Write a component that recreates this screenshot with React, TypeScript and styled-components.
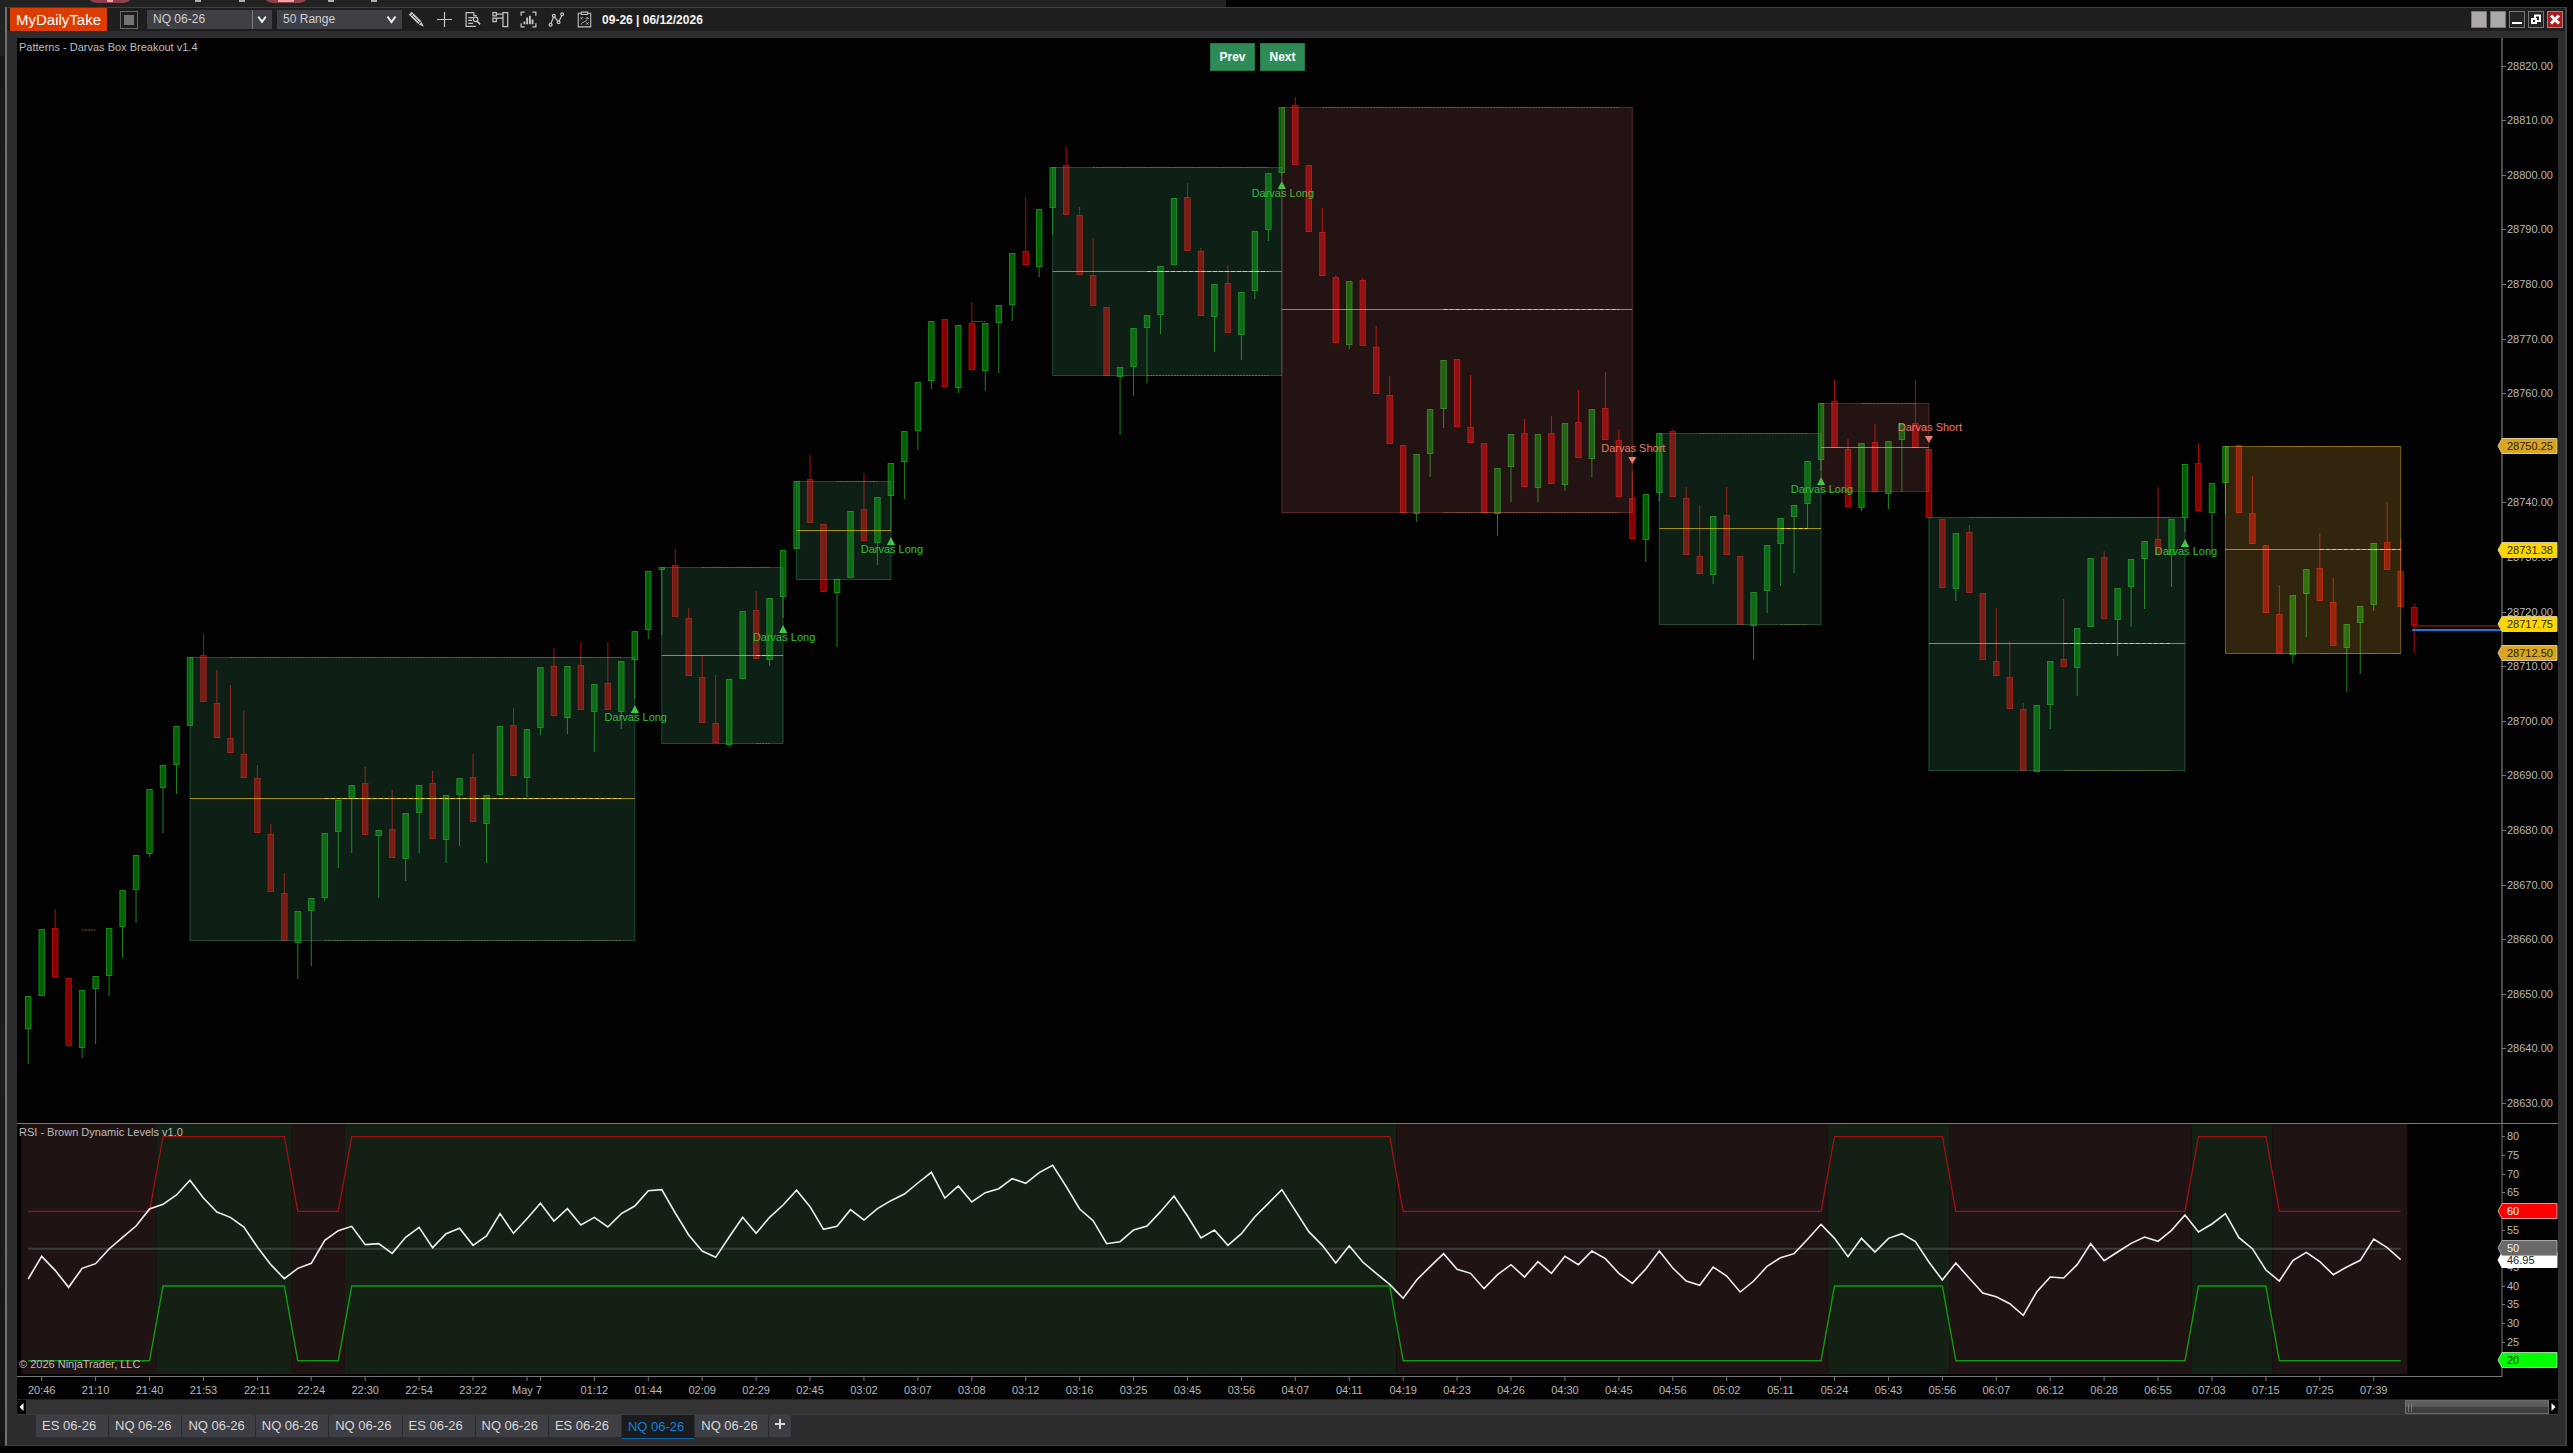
import React from "react";
import styled, { createGlobalStyle, css } from "styled-components";

const FONT = '"Liberation Sans", Arial, sans-serif';

/* ---------- geometry of the chart canvas ---------- */
const LEFT = 17;
const TOP = 38;
const WIDTH = 2541;
const HEIGHT = 1361;
const AXIS_X = 2502;
const RSI_TOP = 1110;
const RANGE = 68;

const barX = (i: number) => 28.2 + 13.48 * i;
const priceY = (p: number) => 66 + (28820 - p) * 5.46;
const rsiY = (v: number) => 1136.7 + (80 - v) * 3.733;

/* close / open levels of every range bar, in canvas rows */
const BARS: [number, number][] = [
  [996, 1029], [929, 996], [977, 928], [1046, 978], [990, 1048], [976, 989], [928, 976], [890, 927], [855, 890],
  [789, 854], [765, 788], [726, 765], [657, 726], [702, 655], [738, 703], [753, 738], [778, 754], [833, 778],
  [892, 834], [941, 893], [911, 943], [898, 911], [833, 898], [800, 832], [785, 799], [835, 783], [830, 836],
  [858, 829], [813, 859], [785, 813], [839, 783], [795, 840], [778, 795], [822, 777], [795, 824], [726, 795],
  [776, 725], [729, 778], [667, 728], [716, 666], [666, 718], [710, 665], [684, 712], [710, 683], [661, 712],
  [631, 660], [571, 630], [567, 570], [617, 565], [676, 618], [723, 677], [743, 723], [679, 745], [611, 679],
  [659, 610], [598, 660], [550, 597], [481, 549], [523, 479], [592, 524], [579, 593], [511, 578], [541, 509],
  [497, 543], [463, 496], [431, 462], [382, 431], [321, 381], [387, 319], [325, 388], [370, 323], [323, 371],
  [305, 323], [253, 305], [265, 251], [209, 267], [167, 208], [215, 165], [275, 215], [306, 275], [376, 307],
  [367, 377], [328, 367], [315, 328], [266, 315], [198, 265], [251, 197], [316, 251], [284, 317], [333, 283],
  [292, 335], [231, 291], [173, 230], [107, 173], [165, 105], [232, 165], [276, 232], [343, 277], [281, 345],
  [346, 280], [394, 347], [444, 395], [513, 445], [454, 514], [409, 454], [360, 409], [427, 359], [443, 427],
  [513, 443], [468, 514], [434, 467], [487, 433], [434, 488], [484, 433], [423, 485], [458, 422], [409, 459],
  [440, 408], [497, 440], [539, 498], [494, 540], [433, 493], [497, 431], [555, 498], [574, 556], [516, 575],
  [555, 515], [625, 556], [592, 626], [545, 591], [518, 544], [505, 517], [461, 504], [403, 460], [448, 401],
  [507, 449], [443, 508], [492, 442], [441, 494], [424, 440], [448, 423], [518, 449], [588, 519], [533, 589],
  [593, 532], [660, 593], [676, 661], [709, 677], [771, 709], [705, 772], [661, 705], [667, 659], [628, 668],
  [558, 627], [619, 557], [588, 620], [559, 587], [541, 559], [555, 539], [519, 555], [464, 518], [511, 463],
  [483, 513], [446, 483], [513, 445], [544, 513], [613, 545], [653, 614], [595, 655], [569, 594], [601, 568],
  [646, 602], [624, 648], [606, 623], [543, 605], [570, 542], [607, 571], [625, 607],
];

type Tone = "long" | "short" | "open";
interface Box {
  from: number;
  to: number;
  top: number;
  bottom: number;
  tone: Tone;
  topDots: [number, number];
  lowDots: [number, number] | null;
}

const BOXES: Box[] = [
  { from: 12, to: 45, top: 657, bottom: 940, tone: "long", topDots: [15, 44], lowDots: [22, 44] },
  { from: 47, to: 56, top: 567, bottom: 743, tone: "long", topDots: [50, 55], lowDots: [54, 55] },
  { from: 57, to: 64, top: 481, bottom: 579, tone: "long", topDots: [60, 63], lowDots: null },
  { from: 76, to: 93, top: 167, bottom: 375, tone: "long", topDots: [79, 92], lowDots: [83, 92] },
  { from: 93, to: 119, top: 107, bottom: 512, tone: "short", topDots: [96, 118], lowDots: [105, 118] },
  { from: 121, to: 133, top: 433, bottom: 624, tone: "long", topDots: [124, 132], lowDots: [130, 132] },
  { from: 133, to: 141, top: 403, bottom: 491, tone: "short", topDots: [136, 140], lowDots: null },
  { from: 141, to: 160, top: 517, bottom: 770, tone: "long", topDots: [144, 159], lowDots: [151, 159] },
  { from: 163, to: 176, top: 446, bottom: 653, tone: "open", topDots: [166, 176], lowDots: [170, 176] },
];

const TONES: Record<Tone, { fill: string; edge: string }> = {
  long: { fill: "rgba(66,150,104,0.2)", edge: "rgba(60,150,100,0.45)" },
  short: { fill: "rgba(205,104,104,0.17)", edge: "rgba(205,92,92,0.36)" },
  open: { fill: "rgba(218,165,56,0.22)", edge: "rgba(218,165,32,0.5)" },
};

const SIGNALS = [
  { bar: 45, y: 721, side: "long" },
  { bar: 56, y: 641, side: "long" },
  { bar: 64, y: 553, side: "long" },
  { bar: 93, y: 197, side: "long" },
  { bar: 119, y: 452, side: "short" },
  { bar: 133, y: 493, side: "long" },
  { bar: 141, y: 431, side: "short" },
  { bar: 160, y: 555, side: "long" },
];

/* RSI curve, in thirds of a row below the panel origin */
const RSI = [
  507, 439, 481, 532, 475, 461, 417, 382, 348, 297, 283, 255, 211, 264, 306, 322, 351, 411, 464, 506, 475, 460, 391,
  362, 349, 404, 401, 430, 382, 352, 413, 371, 355, 406, 378, 311, 370, 326, 280, 333, 296, 345, 322, 351, 311, 288,
  242, 239, 309, 375, 423, 442, 381, 322, 370, 322, 285, 241, 290, 358, 349, 299, 330, 296, 272, 252, 219, 187, 264,
  228, 276, 248, 236, 206, 220, 188, 166, 229, 297, 332, 401, 395, 360, 348, 305, 258, 318, 384, 360, 406, 371, 320,
  280, 239, 302, 365, 406, 459, 407, 456, 490, 523, 565, 510, 470, 431, 478, 490, 536, 494, 464, 501, 455, 490, 439,
  464, 423, 446, 490, 520, 477, 423, 474, 513, 526, 471, 498, 546, 513, 469, 443, 431, 388, 343, 385, 440, 385, 426,
  385, 371, 395, 456, 510, 459, 505, 549, 560, 581, 616, 546, 501, 504, 464, 401, 452, 426, 400, 381, 394, 361, 315,
  366, 342, 311, 383, 416, 480, 513, 452, 427, 455, 494, 471, 451, 387, 413, 449,
];

/* last bar of each regime; bearish and bullish alternate */
const REGIMES: { from: number; to: number; bull: boolean }[] = [
  { from: 0, to: 9, bull: false },
  { from: 10, to: 19, bull: true },
  { from: 20, to: 23, bull: false },
  { from: 24, to: 101, bull: true },
  { from: 102, to: 133, bull: false },
  { from: 134, to: 142, bull: true },
  { from: 143, to: 160, bull: false },
  { from: 161, to: 166, bull: true },
  { from: 167, to: 176, bull: false },
];

const EVENING = ["20:46", "21:10", "21:40", "21:53", "22:11", "22:24", "22:30", "22:54", "23:22", "May 7"];
const MORNING = [
  "01:12", "01:44", "02:09", "02:29", "02:45", "03:02", "03:07", "03:08", "03:12", "03:16", "03:25", "03:45",
  "03:56", "04:07", "04:11", "04:19", "04:23", "04:26", "04:30", "04:45", "04:56", "05:02", "05:11", "05:24",
  "05:43", "05:56", "06:07", "06:12", "06:28", "06:55", "07:03", "07:15", "07:25", "07:39",
];
const TIMES = [
  ...EVENING.map((label, k) => ({ label, bar: 1 + 4 * k })),
  ...MORNING.map((label, k) => ({ label, bar: 42 + 4 * k })),
];

const TABS = [
  "ES 06-26", "NQ 06-26", "NQ 06-26", "NQ 06-26", "NQ 06-26", "ES 06-26", "NQ 06-26", "ES 06-26", "NQ 06-26",
  "NQ 06-26",
];
const ACTIVE_TAB = 8;

/* ---------- styles ---------- */
const GlobalStyle = createGlobalStyle`
  html, body { margin: 0; background: #000; }
  body { font-family: ${FONT}; }
  *, *::before, *::after { box-sizing: border-box; }
`;

const Desktop = styled.div`
  display: flex;
  flex-direction: column;
  min-height: 100vh;
  background: #020202;
`;

const BackStrip = styled.div`
  display: flex;
  height: 7px;
  width: 1226px;
  max-width: 100%;
  background: #222;
`;

const Middle = styled.div`
  display: flex;
`;

const BackEdge = styled.div`
  flex: none;
  width: 5px;
  background: linear-gradient(#222 0, #222 48px, #181818 49px, #1c1c1c 75%, #151515);
`;

const Window = styled.main`
  flex: 1;
  min-width: 0;
  display: flex;
  flex-direction: column;
  margin-right: 6px;
  border: solid #3f3f41;
  border-width: 1px 2px 1px 2px;
  border-left-color: #707070;
  background: #2d2d30;
`;

const TitleBar = styled.header`
  display: flex;
  align-items: center;
  height: 23px;
  padding: 0 2px 0 3px;
  background: #1e1e1e;
`;

const Brand = styled.h1`
  margin: 0 13px 0 0;
  padding: 0 6px;
  height: 23px;
  line-height: 23px;
  font-size: 15px;
  font-weight: 400;
  color: #fff;
  background: #dc3c00;
`;

const ToolButton = styled.button<{ $wide?: boolean }>`
  display: flex;
  align-items: center;
  justify-content: center;
  flex: none;
  width: ${(p) => (p.$wide ? 28 : 18)}px;
  height: 18px;
  padding: 0;
  border: 0;
  color: #c4c4c4;
  background: transparent;
`;

const LinkSquare = styled(ToolButton)`
  margin-right: 9px;
  border: 1px solid #686868;
  background: #1e1e1e;
  &::before {
    content: "";
    width: 10px;
    height: 10px;
    background: #747474;
  }
`;

const Picker = styled.label<{ $gap: number; $split?: boolean }>`
  display: grid;
  flex: none;
  width: 125px;
  height: 19px;
  margin-right: ${(p) => p.$gap}px;
  background: #3f3f46;
  color: #d0d0d0;
  & > * {
    grid-area: 1 / 1;
  }
  & > svg {
    justify-self: end;
    align-self: stretch;
    width: 20px;
    height: 19px;
    pointer-events: none;
    ${(p) => p.$split && css`border-left: 1px solid #7a7a7a;`}
  }
`;

const PickerSelect = styled.select`
  appearance: none;
  width: 100%;
  height: 19px;
  padding: 0 24px 0 6px;
  border: 0;
  font: 12px/19px ${FONT};
  color: inherit;
  background: transparent;
`;

const Contract = styled.span`
  padding-left: 4px;
  font-size: 12px;
  font-weight: 700;
  color: #f4f4f4;
`;

const WindowButtons = styled.div`
  display: flex;
  gap: 3px;
  margin-left: auto;
`;

const WindowButton = styled.button<{ $kind: "blank" | "dark" | "close" }>`
  display: flex;
  align-items: center;
  justify-content: center;
  width: 16px;
  height: 17px;
  padding: 0;
  color: #fff;
  border: 1px solid ${(p) => (p.$kind === "close" ? "#a98080" : "#777")};
  background: ${(p) => (p.$kind === "blank" ? "#aca8a9" : p.$kind === "close" ? "#a81c22" : "#262226")};
`;

const Body = styled.div`
  padding: 7px 7px 0 10px;
`;

const ChartFrame = styled.section`
  position: relative;
  background: #020202;
`;

const Canvas = styled.svg`
  display: block;
  width: 100%;
  height: auto;
  font-family: ${FONT};
  font-size: 11px;
`;

const NavOverlay = styled.nav`
  position: absolute;
  top: 5px;
  left: 0;
  right: 60px;
  display: flex;
  justify-content: center;
  gap: 5px;
`;

const NavButton = styled.button`
  height: 28px;
  width: 45px;
  padding: 0;
  border: 1px solid #27744a;
  font: 700 12px/16px ${FONT};
  color: #fff;
  background: #2e8b57;
`;

const ScrollTrack = styled.div`
  display: flex;
  align-items: stretch;
  height: 16px;
  border-top: 1px solid #222;
  border-bottom: 1px solid #3a3a3c;
  background: #333;
`;

const ScrollArrow = styled.button`
  display: flex;
  align-items: center;
  justify-content: center;
  width: 9px;
  padding: 0;
  border: 0;
  color: #fff;
  background: #000;
`;

const ScrollThumb = styled.div`
  width: 144px;
  margin-left: auto;
  padding: 3px 2px;
  border: 1px solid #6e6e6e;
  background: linear-gradient(#606060 0, #5a5a5a 45%, #404040 50%, #3c3c3c);
  &::before {
    content: "";
    display: block;
    width: 4px;
    height: 8px;
    border: solid #777;
    border-width: 0 1px;
  }
`;

const TabStrip = styled.nav`
  display: flex;
  align-items: flex-start;
  gap: 1px;
  height: 30px;
  padding-left: 19px;
`;

const Tab = styled.button<{ $active?: boolean; $small?: boolean }>`
  height: 22px;
  min-width: ${(p) => (p.$small ? 22 : 72)}px;
  padding: ${(p) => (p.$small ? "0 2px" : "0 10px 0 6px")};
  border: 0;
  text-align: ${(p) => (p.$small ? "center" : "left")};
  font: 13px/20px ${FONT};
  color: #d8d8d8;
  background: #3e3e45;
  ${(p) =>
    p.$active &&
    css`
      height: 24px;
      color: #1080d8;
      background: #1b1b1d;
      border-bottom: 1px solid #0a64a8;
    `}
`;

/* ---------- icons ---------- */
const Icon = ({ children }: { children: React.ReactNode }) => (
  <svg width="17" height="17" viewBox="0 0 18 18" fill="none" stroke="currentColor" strokeWidth="1.3">
    {children}
  </svg>
);

const TOOLS: { name: string; art: React.ReactNode }[] = [
  {
    name: "Drawing tools",
    art: (
      <>
        <path d="M.8 4 4 .8l10 9.800-3.200 3.200z" fill="currentColor" stroke="none" />
        <path d="M2.400 6 5.900 2.500M4.600 4.600l7.400 7.400" stroke="#1e1e1e" strokeWidth="0.8" />
        <path d="m14.400 11.400 2.400 5.400-5.400-2.400z" fill="currentColor" stroke="none" />
      </>
    ),
  },
  { name: "Crosshair", art: <path d="M9 1v16M1 9h16" /> },
  {
    name: "Data box",
    art: (
      <>
        <path d="M10.5 1.7H2.2v14.6h10.3M10.5 1.7v3.2h3" />
        <path d="M4.5 7h5M4.5 10h4M4.5 13h5" />
        <circle cx="12.3" cy="8.8" r="2.4" />
        <path d="m14 10.8 3 3.4" strokeWidth="1.8" />
      </>
    ),
  },
  {
    name: "Chart trader",
    art: (
      <>
        <path d="M11.600 1.600h5v15h-5z" />
        <path d="M1 1.600h3.600v3.600H1zM1 7.600h3.600v3.600H1zM4.600 3.400h7M4.600 7.600h7" />
      </>
    ),
  },
  {
    name: "Data series",
    art: (
      <>
        <path d="M1.200 5V1.200H5M13 1.200h3.800V5M1.200 13v3.800H5M13 16.800h3.800V13" />
        <path d="M4.7 14v-3M7.6 14V7M10.5 14V5M13.3 14V9" strokeWidth="2" />
      </>
    ),
  },
  {
    name: "Indicators",
    art: (
      <>
        <path d="M2.8 14 6.2 5.6l5 6 3.8-7.4" />
        <circle cx="2.8" cy="14.6" r="1.5" fill="#1e1e1e" />
        <circle cx="6.2" cy="5" r="1.5" fill="#1e1e1e" />
        <circle cx="11.2" cy="12" r="1.5" fill="#1e1e1e" />
        <circle cx="15" cy="3.4" r="1.5" fill="#1e1e1e" />
      </>
    ),
  },
  {
    name: "Strategies",
    art: (
      <>
        <path d="M5.5 2.4H2.400v14.4h13.200V2.4h-3.100" strokeWidth="1.1" />
        <path d="M5.6 1.2h6.8v2.600H5.600z" strokeWidth="1.1" />
        <path d="m4.8 6.6 2.2 2.2M7 6.6 4.8 8.800M10.800 12l2.4 2.4M13.200 12l-2.400 2.400M5.600 14.400c0-3.400 6-2 6.400-6.800M10.200 8.400l1.800-1.800 1.600 2" strokeWidth="0.9" />
      </>
    ),
  },
];

const Chevron = () => (
  <svg viewBox="0 0 20 19" fill="none" stroke="#f0f0f0" strokeWidth="2" aria-hidden="true">
    <path d="m5.5 6.5 4 5.5 4-5.5" />
  </svg>
);

/* ---------- chart parts ---------- */
const Candle = ({ bar, close, open }: { bar: number; close: number; open: number }) => {
  const x = barX(bar);
  const up = close < open;
  const live = bar === BARS.length - 1;
  const high = live ? 604 : up ? close : close - RANGE;
  const low = live ? 653 : up ? close + RANGE : close;
  const ink = up ? "#1a861a" : "#b00a0a";
  return (
    <g stroke={ink}>
      {high < Math.min(open, close) - 1 && <line x1={x} x2={x} y1={high} y2={Math.min(open, close)} />}
      {low > Math.max(open, close) + 1 && <line x1={x} x2={x} y1={Math.max(open, close)} y2={low} />}
      <rect
        x={x - 2.7}
        y={Math.min(open, close) + 0.5}
        width={5.4}
        height={Math.max(1, Math.abs(open - close) - 1)}
        fill={up ? "#006000" : "#840000"}
      />
    </g>
  );
};

const DarvasBox = ({ box }: { box: Box }) => {
  const x1 = barX(box.from);
  const x2 = barX(box.to);
  const mid = Math.floor((box.top + box.bottom) / 2) + 0.5;
  const tone = TONES[box.tone];
  const dot = box.tone === "long" ? "rgba(150,140,40,0.55)" : "rgba(200,140,40,0.5)";
  return (
    <g>
      <rect x={x1} y={box.top + 0.5} width={x2 - x1} height={box.bottom - box.top} fill={tone.fill} stroke={tone.edge} />
      <line x1={barX(box.topDots[0])} x2={barX(box.topDots[1])} y1={box.top + 0.5} y2={box.top + 0.5} stroke={dot} strokeDasharray="2 1" />
      <line x1={x1} x2={x2} y1={mid} y2={mid} stroke="rgba(255,215,0,0.62)" />
      {box.lowDots && (
        <>
          <line x1={barX(box.lowDots[0])} x2={barX(box.lowDots[1])} y1={mid} y2={mid} stroke="#ecd21c" strokeDasharray="4 2" />
          <line x1={barX(box.lowDots[0])} x2={barX(box.lowDots[1])} y1={box.bottom + 0.5} y2={box.bottom + 0.5} stroke={dot} strokeDasharray="2 1" />
        </>
      )}
    </g>
  );
};

const Signal = ({ bar, y, side }: { bar: number; y: number; side: string }) => {
  const x = barX(bar);
  const long = side === "long";
  const tip = long ? y - 16 : y + 12;
  const base = long ? y - 8 : y + 5;
  return (
    <g>
      <path d={`M${x} ${tip}L${x + 4} ${base}H${x - 4}Z`} fill={long ? "#3cdc3c" : "#fa8072"} />
      <text x={x + 1} y={y} textAnchor="middle" fill={long ? "#2fc42f" : "#ee7a6c"}>
        {long ? "Darvas Long" : "Darvas Short"}
      </text>
    </g>
  );
};

const AxisTag = ({ y, label, fill, ink, edge = "#d8c890" }: { y: number; label: string; fill: string; ink: string; edge?: string }) => (
  <g>
    <path d={`M2498 ${y}l4-7.5h55v15h-55z`} fill={fill} stroke={edge} />
    <text x="2507" y={y + 4} fill={ink}>{label}</text>
  </g>
);

const levelPath = (bear: number, bull: number) =>
  REGIMES.map((r, k) => {
    const y = rsiY(r.bull ? bull : bear);
    return `${k ? "L" : "M"}${barX(r.from)} ${y}L${barX(r.to)} ${y}`;
  }).join("");

const Chart = () => {
  const prices = Array.from({ length: 20 }, (_, k) => 28820 - k * 10);
  const levels = Array.from({ length: 12 }, (_, k) => 80 - k * 5);
  return (
    <Canvas viewBox={`${LEFT} ${TOP} ${WIDTH} ${HEIGHT}`} role="img" aria-label="NQ 06-26 50 Range chart with RSI panel">
      <text x="19" y="51" fill="#bdbdbd">Patterns - Darvas Box Breakout v1.4</text>

      {BARS.map(([close, open], k) => (
        <Candle key={k} bar={k} close={close} open={open} />
      ))}
      {SIGNALS.map((s) => (
        <Signal key={s.bar} {...s} />
      ))}
      {BOXES.map((b) => (
        <DarvasBox key={b.from} box={b} />
      ))}
      <g stroke="#7e5812" strokeDasharray="2 1">
        <path d={`M${barX(4)} 930H${barX(5)}M${barX(70)} 321.5H${barX(71)}`} />
      </g>
      <path d="M2412 626H2502" stroke="#a82020" />
      <path d="M2412 630H2502" stroke="#1c78d8" strokeWidth="2" />

      {REGIMES.map((r) => (
        <rect key={r.from} x={barX(r.from - 0.5)} y="1124" width={barX(r.to) - barX(r.from - 1)} height="250" fill={r.bull ? "#152015" : "#201314"} />
      ))}
      <path d={`M${barX(0)} ${rsiY(50)}H${barX(176)}`} stroke="#3a3e3a" strokeWidth="2" />
      <path d={levelPath(60, 80)} fill="none" stroke="#a01010" strokeWidth="1.3" />
      <path d={levelPath(20, 40)} fill="none" stroke="#0e980e" strokeWidth="1.4" />
      <polyline
        points={RSI.map((v, k) => `${barX(k)},${RSI_TOP + v / 3}`).join(" ")}
        fill="none"
        stroke="#f0f0f0"
        strokeWidth="1.6"
      />
      <text x="19" y="1136" fill="#bdbdbd">RSI - Brown Dynamic Levels v1.0</text>
      <text x="19" y="1368" fill="#bdbdbd">© 2026 NinjaTrader, LLC</text>

      <g stroke="#787878">
        <path d="M17 1123.5H2558M17 1376.5H2502" />
        <path d={`M${AXIS_X} 38V1123`} stroke="#4c4c4c" strokeWidth="2" />
        <path d={`M${AXIS_X} 1123V1377`} strokeWidth="1" />
        {TIMES.map((t) => (
          <path key={t.bar} d={`M${barX(t.bar)} 1377v4`} />
        ))}
        <path d={`M${barX(38)} 1377v4`} />
        {prices.map((p) => (
          <path key={p} d={`M2502 ${Math.floor(priceY(p))}.5h4`} />
        ))}
        {levels.map((v) => (
          <path key={v} d={`M2502 ${Math.floor(rsiY(v))}.5h3`} />
        ))}
      </g>
      <g fill="#b8b8b8">
        {TIMES.map((t) => (
          <text key={t.bar} x={barX(t.bar)} y="1394" textAnchor="middle">{t.label}</text>
        ))}
        {prices.map((p) => (
          <text key={p} x="2507" y={Math.floor(priceY(p)) + 4}>{p.toFixed(2)}</text>
        ))}
        {levels.map((v) => (
          <text key={v} x="2507" y={Math.floor(rsiY(v)) + 4}>{v}</text>
        ))}
      </g>

      <AxisTag y={446} label="28750.25" fill="#daa520" ink="#2c2208" />
      <AxisTag y={550} label="28731.38" fill="#ffd700" ink="#2c2600" />
      <AxisTag y={624} label="28717.75" fill="#ffd700" ink="#2c2600" />
      <AxisTag y={653} label="28712.50" fill="#daa520" ink="#2c2208" />
      <AxisTag y={1211} label="60" fill="#ff0000" ink="#ffffff" edge="#d0a0a0" />
      <AxisTag y={1260} label="46.95" fill="#ffffff" ink="#222222" edge="#ffffff" />
      <AxisTag y={1248} label="50" fill="#696969" ink="#f0f0f0" edge="#a8a8a8" />
      <AxisTag y={1360} label="20" fill="#00ff00" ink="#083008" edge="#a0d8a0" />
    </Canvas>
  );
};

export default function App() {
  return (
    <Desktop>
      <GlobalStyle />
      <BackStrip>
        <svg width="400" height="7" aria-hidden="true">
          <path d="M90 0h40q-2 3-8 3H98q-6 0-8-3z" fill="#8c4048" />
          <path d="M266 0h40q-2 3-8 3h-24q-6 0-8-3z" fill="#8c4048" />
          <path d="M107 0h6v2h-6zM278 0h16v2h-16z" fill="#f4a0a8" />
          <path d="M195 0h6v2h-6zM239 0h6v2h-6zM328 0h6v2h-6zM371 0h6v2h-6z" fill="#b0b0b0" />
        </svg>
      </BackStrip>
      <Middle>
        <BackEdge />
        <Window>
          <TitleBar>
            <Brand>MyDailyTake</Brand>
            <LinkSquare aria-label="Link window" />
            <Picker $gap={5} $split>
              <PickerSelect aria-label="Instrument" defaultValue="NQ 06-26">
                <option>NQ 06-26</option>
                <option>ES 06-26</option>
              </PickerSelect>
              <Chevron />
            </Picker>
            <Picker $gap={0}>
              <PickerSelect aria-label="Interval" defaultValue="50 Range">
                <option>50 Range</option>
              </PickerSelect>
              <Chevron />
            </Picker>
            {TOOLS.map((t) => (
              <ToolButton key={t.name} $wide aria-label={t.name}>
                <Icon>{t.art}</Icon>
              </ToolButton>
            ))}
            <Contract>09-26 | 06/12/2026</Contract>
            <WindowButtons>
              <WindowButton $kind="blank" aria-label="Pin" />
              <WindowButton $kind="blank" aria-label="Link" />
              <WindowButton $kind="dark" aria-label="Minimize">
                <svg width="14" height="15" viewBox="0 0 14 15">
                  <path d="M2 10h10v2H2z" fill="currentColor" />
                </svg>
              </WindowButton>
              <WindowButton $kind="dark" aria-label="Restore">
                <svg width="14" height="15" viewBox="0 0 14 15" fill="none" stroke="currentColor" strokeWidth="2">
                  <path d="M3 7h4v4H3zM6 6V3.500h5V9H8" />
                </svg>
              </WindowButton>
              <WindowButton $kind="close" aria-label="Close">
                <svg width="14" height="15" viewBox="0 0 14 15" stroke="currentColor" strokeWidth="3">
                  <path d="m3 3.500 8 8M11 3.500l-8 8" />
                </svg>
              </WindowButton>
            </WindowButtons>
          </TitleBar>
          <Body>
            <ChartFrame>
              <Chart />
              <NavOverlay>
                <NavButton>Prev</NavButton>
                <NavButton>Next</NavButton>
              </NavOverlay>
            </ChartFrame>
            <ScrollTrack>
              <ScrollArrow aria-label="Scroll left">
                <svg width="5" height="8" viewBox="0 0 5 8"><path d="M4.500 0v8L.5 4z" fill="currentColor" /></svg>
              </ScrollArrow>
              <ScrollThumb />
              <ScrollArrow aria-label="Scroll right">
                <svg width="5" height="8" viewBox="0 0 5 8"><path d="M.5 0v8l4-4z" fill="currentColor" /></svg>
              </ScrollArrow>
            </ScrollTrack>
            <TabStrip>
              {TABS.map((t, k) => (
                <Tab key={k} $active={k === ACTIVE_TAB}>{t}</Tab>
              ))}
              <Tab $small aria-label="Add tab">
                <svg width="12" height="12" viewBox="0 0 12 12" stroke="currentColor" strokeWidth="2">
                  <path d="M6 1v10M1 6h10" />
                </svg>
              </Tab>
            </TabStrip>
          </Body>
        </Window>
      </Middle>
    </Desktop>
  );
}
